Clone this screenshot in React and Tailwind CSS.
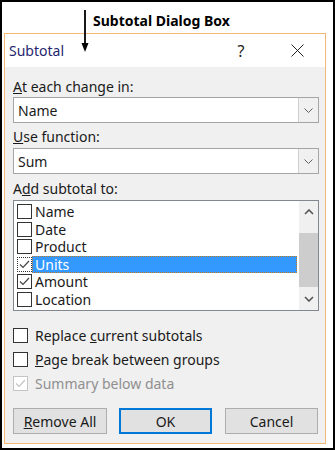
import React from 'react';

const font = { fontFamily: '"Noto Sans", "Open Sans", Arial, sans-serif' };

function Check({ checked, disabled, dotted }) {
    const border = disabled ? 'border-[#c4c4c4]' : dotted ? 'border-[#333] border-dotted' : 'border-[#333]';
    return (
        <div className={`w-[15px] h-[15px] shrink-0 border bg-white flex items-center justify-center ${border}`}>
            {checked && (
                <svg width="13" height="13" viewBox="0 0 13 13">
                    <polyline points="2,6.5 5,9.5 11,3" fill="none" stroke={disabled ? '#c4c4c4' : '#444'} strokeWidth="1.2" />
                </svg>
            )}
        </div>
    );
}

function Chevron({ up, color = '#555' }) {
    return (
        <svg width="10" height="6" viewBox="0 0 10 6">
            <polyline points={up ? '1,5 5,1 9,5' : '1,1 5,5 9,1'} fill="none" stroke={color} strokeWidth="1.6" />
        </svg>
    );
}

function Combo({ value }) {
    return (
        <div className="h-[26px] flex border border-[#a5a5a5] bg-white">
            <div className="flex-1 flex items-center pl-[4px] text-[14px] text-[#1a1a1a]">{value}</div>
            <div className="w-[20px] flex items-center justify-center bg-[#f0f0f0] border-l border-[#d0d0d0]">
                <svg width="9" height="5" viewBox="0 0 9 5">
                    <polyline points="0.5,0.5 4.5,4.5 8.5,0.5" fill="none" stroke="#606060" strokeWidth="1" />
                </svg>
            </div>
        </div>
    );
}

const items = [
    { name: 'Name', checked: false },
    { name: 'Date', checked: false },
    { name: 'Product', checked: false },
    { name: 'Units', checked: true, selected: true },
    { name: 'Amount', checked: true },
    { name: 'Location', checked: false },
];

export default function App() {
    return (
        <div className="w-[335px] h-[450px] border-2 border-black bg-white relative overflow-hidden" style={font}>
            <div className="h-[31px] pt-[10px] pl-[91px] text-[14px] font-bold leading-[18px] text-black">
                Subtotal Dialog Box
            </div>

            <svg className="absolute left-[78px] top-[8px]" width="10" height="43" viewBox="0 0 10 43">
                <line x1="5" y1="0" x2="5" y2="36" stroke="#000" strokeWidth="1.8" />
                <polygon points="1.5,33 8.5,33 5,42" fill="#000" />
            </svg>

            <div className="ml-[2px] w-[322px] h-[411px] border border-[#f2b877] flex flex-col">
                <div className="h-[33px] bg-white flex items-center pl-[4px] pr-[5px] gap-[10px]">
                    <div className="flex-1 text-[14px] text-[#26266e]">Subtotal</div>
                    <div className="w-[46px] text-center text-[16px] text-[#222]">?</div>
                    <div className="w-[46px] flex items-center justify-center">
                        <svg width="13" height="13" viewBox="0 0 13 13">
                            <line x1="0.5" y1="0.5" x2="12.5" y2="12.5" stroke="#222" strokeWidth="1" />
                            <line x1="12.5" y1="0.5" x2="0.5" y2="12.5" stroke="#222" strokeWidth="1" />
                        </svg>
                    </div>
                </div>

                <div className="flex-1 bg-[#f0f0f0] pl-[8px] pr-[6px] flex flex-col text-[14px] text-[#1a1a1a]">
                    <div className="mt-[11px] h-[18px] leading-[18px]"><span className="underline">A</span>t each change in:</div>
                    <div className="mt-[1px]"><Combo value="Name" /></div>

                    <div className="mt-[5px] h-[18px] leading-[18px]"><span className="underline">U</span>se function:</div>
                    <div className="mt-[2px]"><Combo value="Sum" /></div>

                    <div className="mt-[6px] h-[18px] leading-[18px]">A<span className="underline">d</span>d subtotal to:</div>
                    <div className="mt-[2px] h-[111px] border border-[#828790] bg-white flex">
                        <div className="flex-1 pt-[2px] pl-[3px] pr-[2px]">
                            {items.map((it) => (
                                <div key={it.name} className="h-[17.5px] flex items-center">
                                    <Check checked={it.checked} dotted={it.selected} />
                                    <div
                                        className={`flex-1 h-[17px] flex items-center pl-[3px] leading-[17px] ${
                                            it.selected ? 'bg-[#3399ff] text-white outline-1 outline-dotted outline-[#c07a2a] -outline-offset-1' : ''
                                        }`}
                                    >
                                        {it.name}
                                    </div>
                                </div>
                            ))}
                        </div>
                        <div className="w-[19px] bg-[#f0f0f0] flex flex-col">
                            <div className="h-[22px] flex items-center justify-center"><Chevron up /></div>
                            <div className="mt-[10px] h-[54px] bg-[#cdcdcd]" />
                            <div className="flex-1" />
                            <div className="h-[22px] flex items-center justify-center"><Chevron /></div>
                        </div>
                    </div>

                    <div className="mt-[15px] h-[18px] flex items-center gap-[7px]">
                        <Check />
                        <span>Replace <span className="underline">c</span>urrent subtotals</span>
                    </div>
                    <div className="mt-[6px] h-[18px] flex items-center gap-[7px]">
                        <Check />
                        <span><span className="underline">P</span>age break between groups</span>
                    </div>
                    <div className="mt-[6px] h-[18px] flex items-center gap-[7px] text-[#8f8f8f]">
                        <Check checked disabled />
                        <span>Summary below data</span>
                    </div>

                    <div className="mt-[16px] flex">
                        <button className="w-[94px] h-[26px] bg-[#e1e1e1] border border-[#adadad] text-[14px] text-[#1a1a1a]">
                            <span className="underline">R</span>emove All
                        </button>
                        <button className="ml-[12px] w-[93px] h-[26px] bg-[#e1e1e1] border-2 border-[#0078d7] text-[14px] text-[#1a1a1a]">
                            OK
                        </button>
                        <button className="ml-[13px] w-[93px] h-[26px] bg-[#e1e1e1] border border-[#adadad] text-[14px] text-[#1a1a1a]">
                            Cancel
                        </button>
                    </div>
                </div>
            </div>
        </div>
    );
}
